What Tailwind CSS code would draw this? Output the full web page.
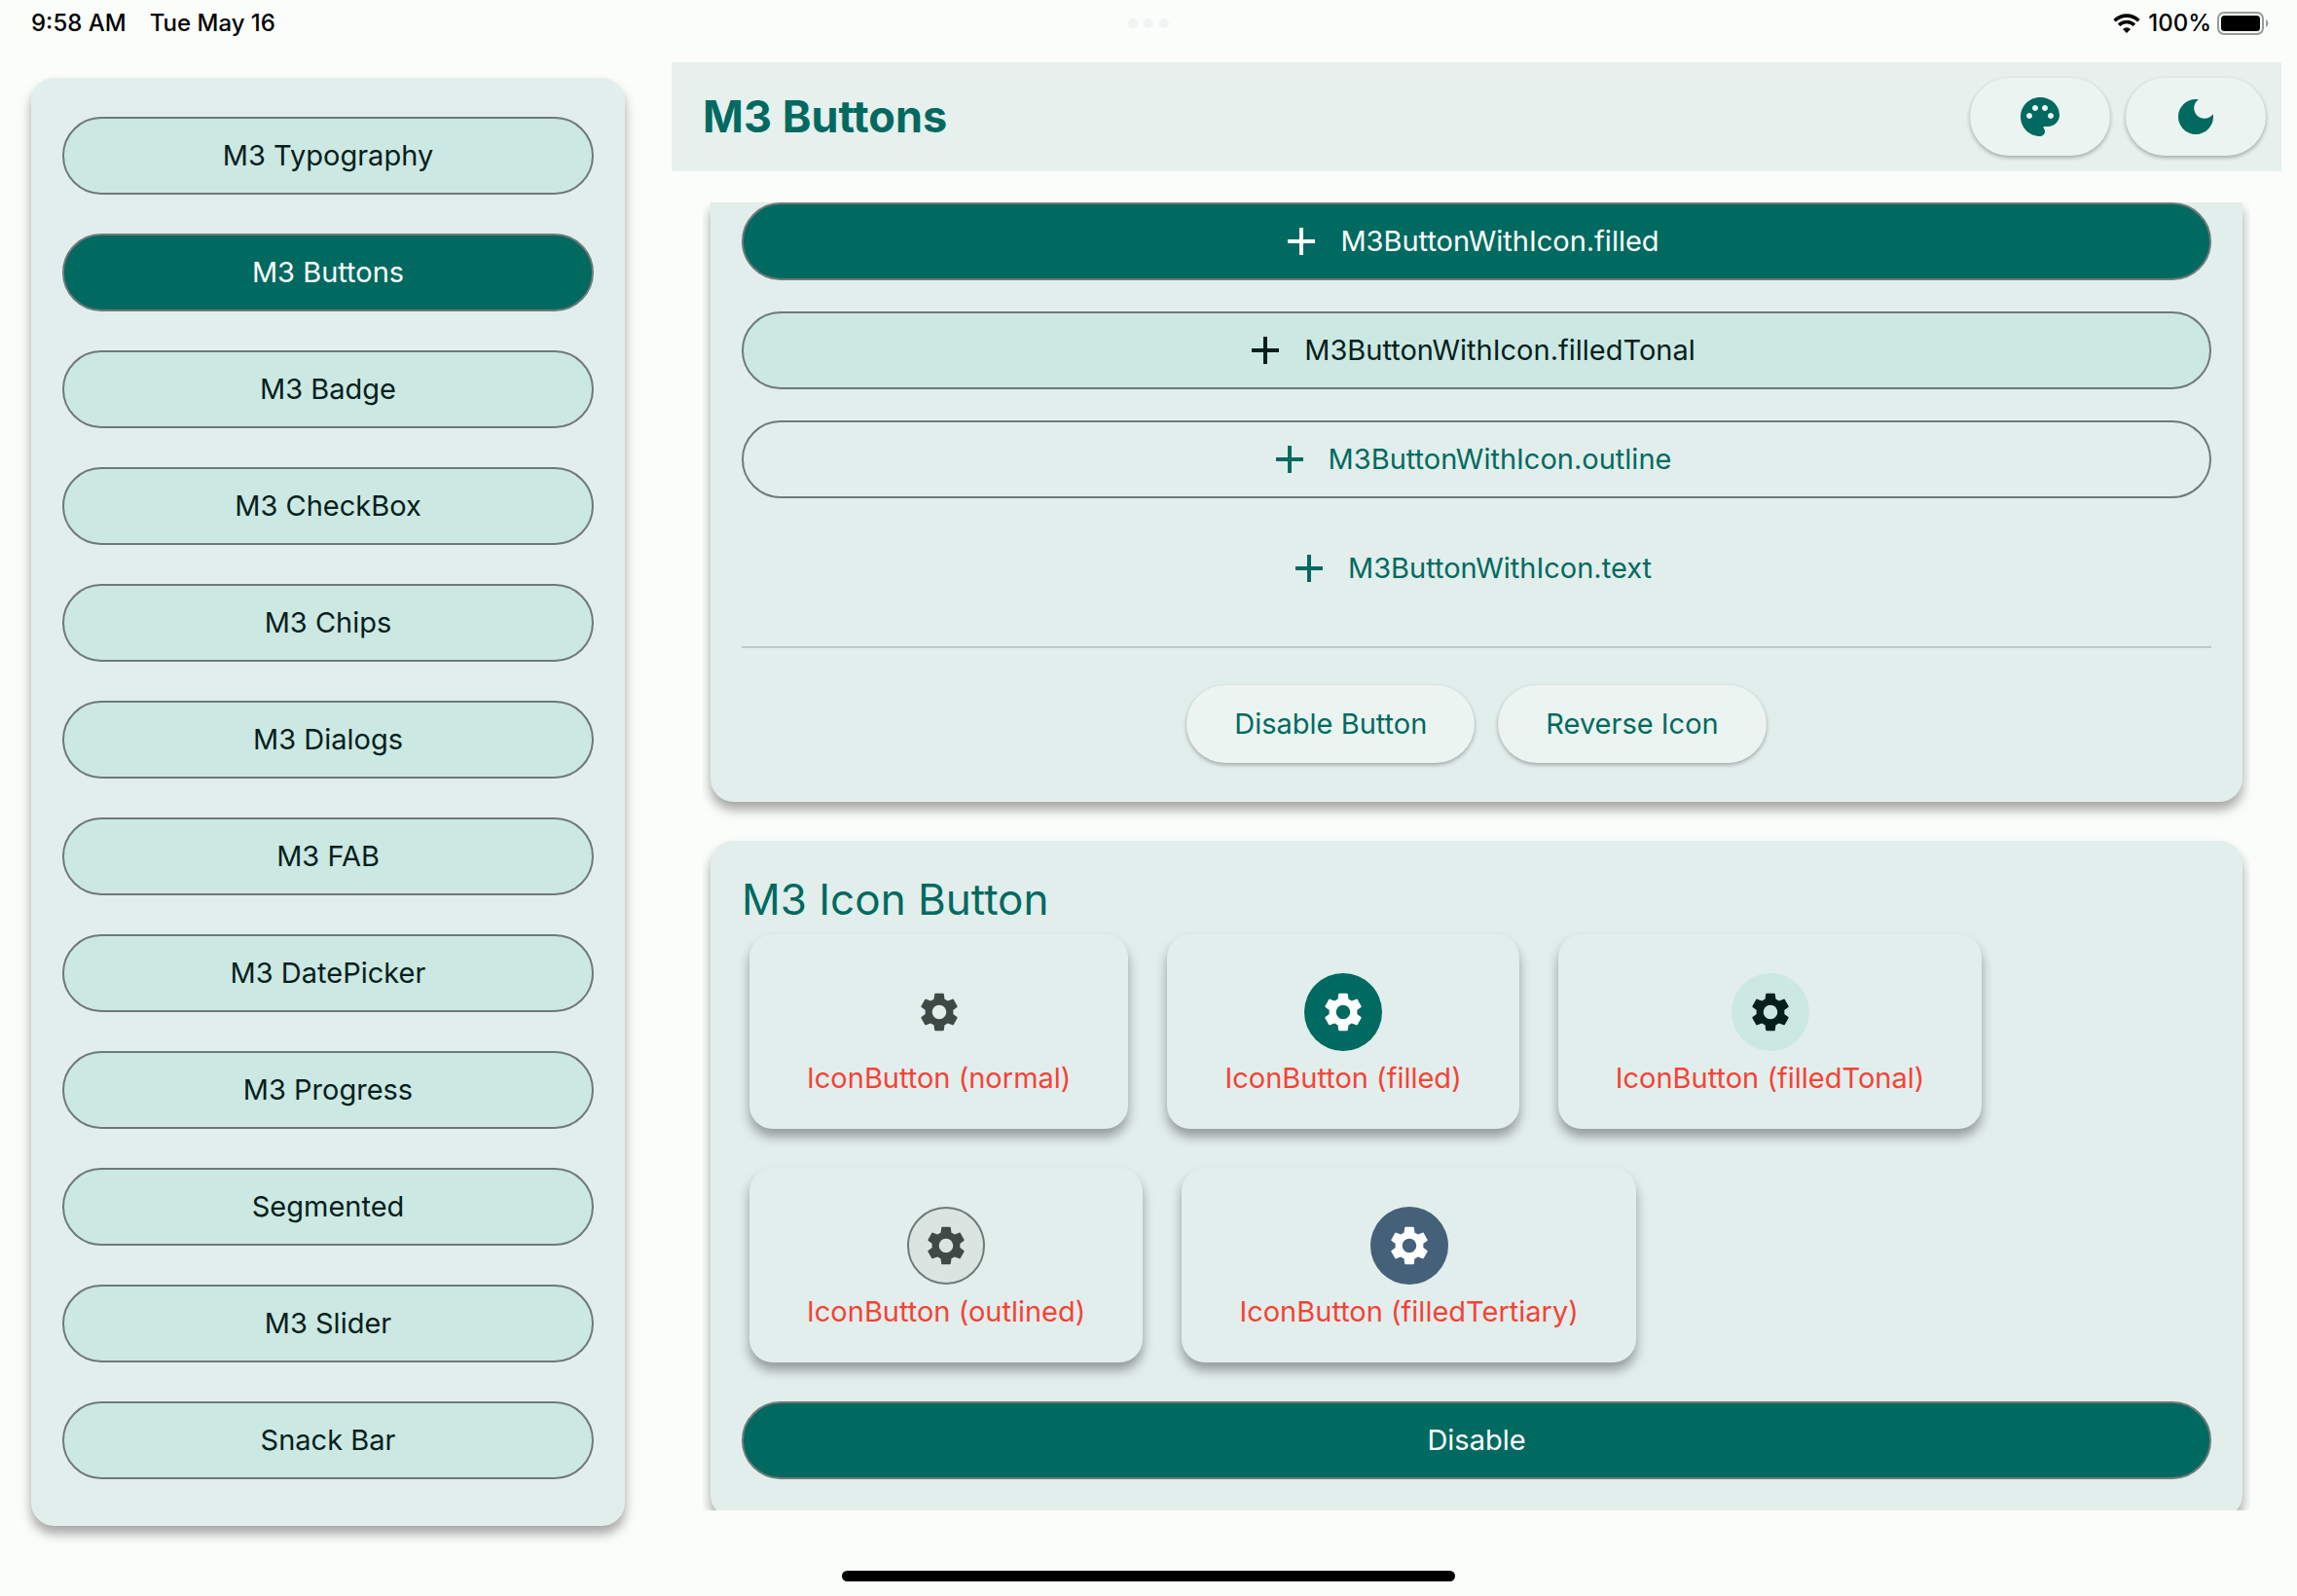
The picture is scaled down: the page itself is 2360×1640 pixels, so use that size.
<!DOCTYPE html>
<html lang="en">
<head>
<meta charset="utf-8">
<title>M3 Buttons</title>
<script src="https://cdn.jsdelivr.net/npm/@tailwindcss/browser@4"></script>
</head>
<body class="flex h-screen flex-col overflow-hidden bg-[#fbfdfb] font-[Inter,sans-serif] text-[29px] leading-10 text-[#05201c]">
<svg class="hidden">
  <symbol id="add" viewBox="0 0 24 24"><path fill="currentColor" d="M19 13h-6v6h-2v-6H5v-2h6V5h2v6h6v2z"/></symbol>
  <symbol id="gear" viewBox="0 0 24 24"><path fill="currentColor" d="M19.14 12.94c.04-.3.06-.61.06-.94 0-.32-.02-.64-.07-.94l2.03-1.58c.18-.14.23-.41.12-.61l-1.92-3.32c-.12-.22-.37-.29-.59-.22l-2.39.96c-.5-.38-1.03-.7-1.62-.94l-.36-2.54c-.04-.24-.24-.41-.48-.41h-3.84c-.24 0-.43.17-.47.41l-.36 2.54c-.59.24-1.13.57-1.62.94l-2.39-.96c-.22-.08-.47 0-.59.22L2.74 8.87c-.12.21-.08.47.12.61l2.03 1.58c-.05.3-.09.63-.09.94s.02.64.07.94l-2.03 1.58c-.18.14-.23.41-.12.61l1.92 3.32c.12.22.37.29.59.22l2.39-.96c.5.38 1.03.7 1.62.94l.36 2.54c.05.24.24.41.48.41h3.84c.24 0 .44-.17.47-.41l.36-2.54c.59-.24 1.13-.56 1.62-.94l2.39.96c.22.08.47 0 .59-.22l1.92-3.32c.12-.22.07-.47-.12-.61l-2.01-1.58zM12 15.6c-1.98 0-3.6-1.62-3.6-3.6s1.62-3.6 3.6-3.6 3.6 1.62 3.6 3.6-1.62 3.6-3.6 3.6z"/></symbol>
</svg>

<header class="relative flex h-16 shrink-0 items-start justify-between pt-2 pl-8 pr-[26px] text-2xl leading-8 font-medium text-black">
  <div class="flex gap-6"><span>9:58 AM</span><span>Tue May 16</span></div>
  <div class="absolute top-[19px] left-1/2 flex -translate-x-1/2 gap-1.5">
    <i class="size-2.5 rounded-full bg-[#f2f4f3]"></i><i class="size-2.5 rounded-full bg-[#f2f4f3]"></i><i class="size-2.5 rounded-full bg-[#f2f4f3]"></i>
  </div>
  <div class="flex items-center">
    <svg class="mr-2 h-5 w-7" viewBox="0 0 28 20"><g fill="none" stroke="#000" stroke-width="3.6"><path d="M1.6 7.2a17.6 17.6 0 0 1 24.8 0"/><path d="M6.1 11.8a11.2 11.2 0 0 1 15.8 0"/></g><path d="M14 20l-4-4a5.7 5.7 0 0 1 8 0z"/></svg>
    <span>100%</span>
    <svg class="ml-1.5 h-6 w-14" viewBox="0 0 56 24"><rect x="1" y="1" width="46" height="22" rx="6" fill="none" stroke="#999b9a" stroke-width="2"/><rect x="4" y="4" width="40" height="16" rx="3.5"/><path fill="#999b9a" d="M50 8a4.5 4.5 0 0 1 0 8z"/></svg>
  </div>
</header>

<div class="flex min-h-0 flex-1 pb-[88px]">
  <nav class="mt-4 ml-8 -mb-4 flex w-[610px] shrink-0 flex-col gap-10 rounded-3xl bg-[#e2eeec] px-8 pt-10 shadow-[0_8px_12px_rgba(0,0,0,0.35)]">
    <button class="h-20 rounded-full border-2 border-[#6f7977] bg-[#cce8e2]">M3 Typography</button>
    <button class="h-20 rounded-full border-2 border-[#6f7977] bg-[#006a60] text-white">M3 Buttons</button>
    <button class="h-20 rounded-full border-2 border-[#6f7977] bg-[#cce8e2]">M3 Badge</button>
    <button class="h-20 rounded-full border-2 border-[#6f7977] bg-[#cce8e2]">M3 CheckBox</button>
    <button class="h-20 rounded-full border-2 border-[#6f7977] bg-[#cce8e2]">M3 Chips</button>
    <button class="h-20 rounded-full border-2 border-[#6f7977] bg-[#cce8e2]">M3 Dialogs</button>
    <button class="h-20 rounded-full border-2 border-[#6f7977] bg-[#cce8e2]">M3 FAB</button>
    <button class="h-20 rounded-full border-2 border-[#6f7977] bg-[#cce8e2]">M3 DatePicker</button>
    <button class="h-20 rounded-full border-2 border-[#6f7977] bg-[#cce8e2]">M3 Progress</button>
    <button class="h-20 rounded-full border-2 border-[#6f7977] bg-[#cce8e2]">Segmented</button>
    <button class="h-20 rounded-full border-2 border-[#6f7977] bg-[#cce8e2]">M3 Slider</button>
    <button class="h-20 rounded-full border-2 border-[#6f7977] bg-[#cce8e2]">Snack Bar</button>
  </nav>

  <main class="mr-4 ml-12 flex min-w-0 flex-1 flex-col text-[#006a60]">
    <div class="flex h-28 shrink-0 items-center gap-4 bg-[#e6f0ed] pr-4 pl-8">
      <h1 class="mr-auto text-[45px] leading-[56px] font-bold">M3 Buttons</h1>
      <button aria-label="Color palette" class="flex h-20 w-36 items-center justify-center rounded-full bg-[#ebf4f1] shadow-[0_2px_4px_rgba(0,0,0,0.3)]">
        <svg class="size-12" viewBox="0 0 24 24"><path fill="currentColor" d="M12 2C6.49 2 2 6.49 2 12s4.49 10 10 10c1.38 0 2.5-1.12 2.5-2.5 0-.61-.23-1.2-.64-1.67-.08-.1-.13-.21-.13-.33 0-.28.22-.5.5-.5H16c3.31 0 6-2.69 6-6 0-4.96-4.49-9-10-9zm5.5 11c-.83 0-1.5-.67-1.5-1.5s.67-1.5 1.5-1.5 1.5.67 1.5 1.5-.67 1.5-1.5 1.5zm-3-4c-.83 0-1.5-.67-1.5-1.5S13.67 6 14.5 6s1.5.67 1.5 1.5S15.33 9 14.5 9zM5 11.5c0-.83.67-1.5 1.5-1.5s1.5.67 1.5 1.5S7.33 13 6.5 13 5 12.33 5 11.5zm6-4c0 .83-.67 1.5-1.5 1.5S8 8.33 8 7.5 8.67 6 9.5 6s1.5.67 1.5 1.5z"/></svg>
      </button>
      <button aria-label="Dark mode" class="flex h-20 w-36 items-center justify-center rounded-full bg-[#ebf4f1] shadow-[0_2px_4px_rgba(0,0,0,0.3)]">
        <svg class="size-12" viewBox="0 0 24 24"><path fill="currentColor" d="M12 3c-4.97 0-9 4.03-9 9s4.03 9 9 9 9-4.03 9-9c0-.46-.04-.92-.1-1.36-.98 1.37-2.58 2.26-4.4 2.26-2.98 0-5.4-2.42-5.4-5.4 0-1.81.89-3.42 2.26-4.4-.44-.06-.9-.1-1.36-.1z"/></svg>
      </button>
    </div>

    <div class="mx-8 mt-8 flex min-h-0 flex-1 flex-col gap-10 overflow-hidden px-2">
      <section class="flex shrink-0 flex-col gap-8 rounded-b-3xl bg-[#e2eeec] px-8 pb-10 shadow-[0_8px_12px_rgba(0,0,0,0.35)]">
        <button class="flex h-20 items-center justify-center gap-4 rounded-full border-2 border-[#6f7977] bg-[#006a60] pr-4 text-white"><svg class="size-12"><use href="#add"/></svg>M3ButtonWithIcon.filled</button>
        <button class="flex h-20 items-center justify-center gap-4 rounded-full border-2 border-[#6f7977] bg-[#cce8e2] pr-4 text-[#05201c]"><svg class="size-12"><use href="#add"/></svg>M3ButtonWithIcon.filledTonal</button>
        <button class="flex h-20 items-center justify-center gap-4 rounded-full border-2 border-[#6f7977] pr-4"><svg class="size-12"><use href="#add"/></svg>M3ButtonWithIcon.outline</button>
        <button class="flex h-20 items-center justify-center gap-4 rounded-full pr-4"><svg class="size-12"><use href="#add"/></svg>M3ButtonWithIcon.text</button>
        <div class="mt-2 flex justify-center gap-6 border-t-2 border-[#bec9c6] pt-[38px]">
          <button class="h-20 rounded-full bg-[#ebf4f1] px-[49px] shadow-[0_2px_4px_rgba(0,0,0,0.3)]">Disable Button</button>
          <button class="h-20 rounded-full bg-[#ebf4f1] px-[49px] shadow-[0_2px_4px_rgba(0,0,0,0.3)]">Reverse Icon</button>
        </div>
      </section>

      <section class="flex shrink-0 flex-col rounded-3xl bg-[#e2eeec] px-8 pt-8 pb-10 shadow-[0_8px_12px_rgba(0,0,0,0.35)]">
        <h2 class="text-[44px] leading-[56px]">M3 Icon Button</h2>
        <div class="mt-2 flex flex-wrap gap-10 px-2 text-[#f44336]">
          <div class="flex h-[200px] flex-col items-center rounded-3xl bg-[#e2eeec] px-[59px] pt-10 shadow-[0_8px_12px_rgba(0,0,0,0.35)]">
            <button aria-label="Settings, normal" class="flex size-20 items-center justify-center rounded-full text-[#3f4946]"><svg class="size-12"><use href="#gear"/></svg></button>
            <span class="mt-2">IconButton (normal)</span>
          </div>
          <div class="flex h-[200px] flex-col items-center rounded-3xl bg-[#e2eeec] px-[59px] pt-10 shadow-[0_8px_12px_rgba(0,0,0,0.35)]">
            <button aria-label="Settings, filled" class="flex size-20 items-center justify-center rounded-full bg-[#006a60] text-white"><svg class="size-12"><use href="#gear"/></svg></button>
            <span class="mt-2">IconButton (filled)</span>
          </div>
          <div class="flex h-[200px] flex-col items-center rounded-3xl bg-[#e2eeec] px-[59px] pt-10 shadow-[0_8px_12px_rgba(0,0,0,0.35)]">
            <button aria-label="Settings, tonal" class="flex size-20 items-center justify-center rounded-full bg-[#cce8e2] text-[#05201c]"><svg class="size-12"><use href="#gear"/></svg></button>
            <span class="mt-2">IconButton (filledTonal)</span>
          </div>
          <div class="flex h-[200px] flex-col items-center rounded-3xl bg-[#e2eeec] px-[59px] pt-10 shadow-[0_8px_12px_rgba(0,0,0,0.35)]">
            <button aria-label="Settings, outlined" class="flex size-20 items-center justify-center rounded-full border-2 border-[#6f7977] bg-[#dae5e1] text-[#3f4946]"><svg class="size-12"><use href="#gear"/></svg></button>
            <span class="mt-2">IconButton (outlined)</span>
          </div>
          <div class="flex h-[200px] flex-col items-center rounded-3xl bg-[#e2eeec] px-[59px] pt-10 shadow-[0_8px_12px_rgba(0,0,0,0.35)]">
            <button aria-label="Settings, tertiary" class="flex size-20 items-center justify-center rounded-full bg-[#456179] text-white"><svg class="size-12"><use href="#gear"/></svg></button>
            <span class="mt-2">IconButton (filledTertiary)</span>
          </div>
        </div>
        <button class="mt-10 h-20 rounded-full border-2 border-[#6f7977] bg-[#006a60] text-white">Disable</button>
      </section>
    </div>
  </main>
</div>
<div class="absolute bottom-[15px] left-1/2 h-[11px] w-[630px] -translate-x-1/2 rounded-full bg-black"></div>
</body>
</html>
